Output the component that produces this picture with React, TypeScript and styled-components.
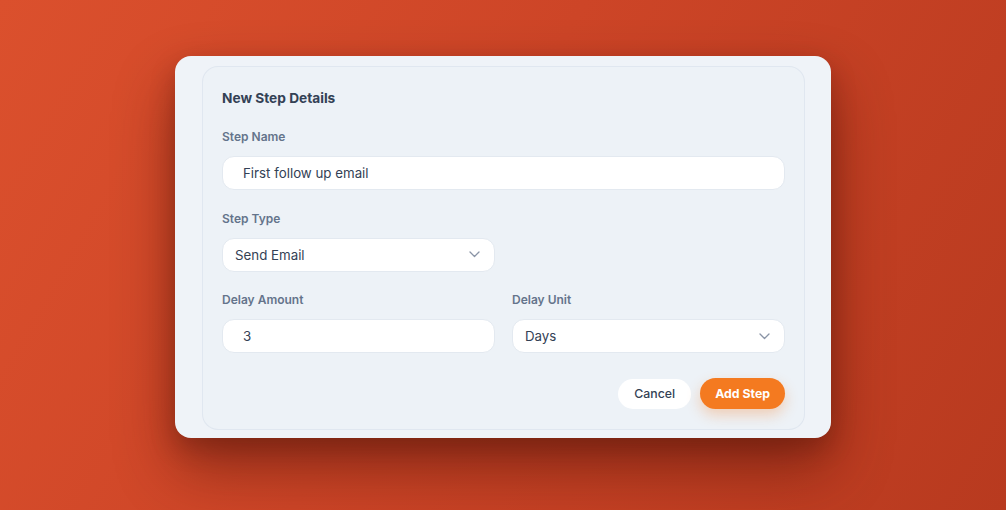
import React from "react";
import styled, { createGlobalStyle } from "styled-components";

const Global = createGlobalStyle`
  html, body { margin: 0; padding: 0; }
  body {
    width: 1006px;
    height: 510px;
    overflow: hidden;
    font-family: Inter, "Noto Sans", sans-serif;
  }
  * { box-sizing: border-box; }
`;

const Backdrop = styled.div`
  width: 1006px;
  height: 510px;
  background: linear-gradient(120deg, #db502d 0%, #cd4527 45%, #b83a1f 100%);
  display: flex;
  justify-content: center;
  align-items: flex-start;
  padding-top: 56px;
`;

const Modal = styled.div`
  width: 656px;
  height: 382px;
  background: #eff3f8;
  border-radius: 16px;
  padding: 10px 26px 8px 27px;
  box-shadow: 0 30px 60px rgba(60, 12, 4, 0.45), 0 10px 24px rgba(60, 12, 4, 0.25);
  display: flex;
`;

const Card = styled.div`
  flex: 1;
  border: 1px solid rgba(220, 228, 238, 0.8);
  border-radius: 16px;
  background: #edf2f7;
  padding: 23px 19px 20px 19px;
  display: flex;
  flex-direction: column;
`;

const Title = styled.h2`
  margin: 0 0 22px;
  font-size: 13.7px;
  line-height: 16px;
  font-weight: 700;
  color: #334155;
`;

const Grid = styled.div`
  display: grid;
  grid-template-columns: 1fr 1fr;
  column-gap: 17px;
  row-gap: 19.5px;
`;

const Field = styled.div<{ $span?: number }>`
  grid-column: span ${(p) => p.$span ?? 1};
  display: flex;
  flex-direction: column;
`;

const Label = styled.label`
  font-size: 12px;
  line-height: 18px;
  font-weight: 600;
  color: #64748b;
  margin-bottom: 10px;
`;

const Input = styled.div<{ $pad?: number }>`
  height: 34px;
  flex: none;
  background: #ffffff;
  border: 1px solid #e3e9f0;
  border-radius: 12px;
  padding: 0 14px 0 ${(p) => p.$pad ?? 20}px;
  display: flex;
  align-items: center;
  justify-content: space-between;
  font-size: 13.3px;
  color: #334155;
`;

const Chevron = () => (
  <svg width="11" height="7" viewBox="0 0 11 7" fill="none">
    <path d="M1 1l4.5 4.5L10 1" stroke="#8a94a6" strokeWidth="1.3" strokeLinecap="round" strokeLinejoin="round" />
  </svg>
);

const Actions = styled.div`
  margin-top: auto;
  display: flex;
  justify-content: flex-end;
  align-items: center;
  gap: 9px;
`;

const Button = styled.button<{ $primary?: boolean }>`
  font-family: inherit;
  border: none;
  border-radius: 999px;
  height: ${(p) => (p.$primary ? 31 : 30)}px;
  padding: 0 ${(p) => (p.$primary ? 15 : 16)}px;
  font-size: 12.3px;
  font-weight: ${(p) => (p.$primary ? 700 : 500)};
  color: ${(p) => (p.$primary ? "#ffffff" : "#334155")};
  background: ${(p) => (p.$primary ? "#f47a20" : "#ffffff")};
  box-shadow: ${(p) => (p.$primary ? "0 6px 14px rgba(244, 122, 32, 0.3)" : "none")};
`;

export default function App() {
  return (
    <>
      <Global />
      <Backdrop>
        <Modal>
          <Card>
            <Title>New Step Details</Title>
            <Grid>
              <Field $span={2}>
                <Label>Step Name</Label>
                <Input>First follow up email</Input>
              </Field>
              <Field>
                <Label>Step Type</Label>
                <Input $pad={12}>
                  Send Email
                  <Chevron />
                </Input>
              </Field>
              <div />
              <Field>
                <Label>Delay Amount</Label>
                <Input>3</Input>
              </Field>
              <Field>
                <Label>Delay Unit</Label>
                <Input $pad={12}>
                  Days
                  <Chevron />
                </Input>
              </Field>
            </Grid>
            <Actions>
              <Button>Cancel</Button>
              <Button $primary>Add Step</Button>
            </Actions>
          </Card>
        </Modal>
      </Backdrop>
    </>
  );
}
